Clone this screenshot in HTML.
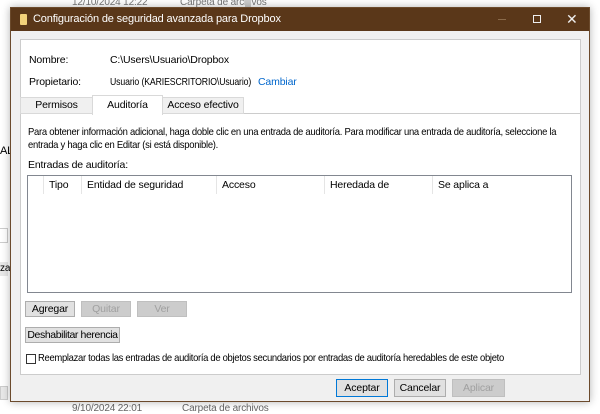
<!DOCTYPE html>
<html><head><style>
*{margin:0;padding:0;box-sizing:border-box}
body{width:600px;height:408px;background:#fff;font-family:"Liberation Sans",sans-serif;font-size:10.5px;letter-spacing:-0.15px;color:#000;position:relative;overflow:hidden;white-space:nowrap}
.a{position:absolute}
.sx{transform-origin:0 0}
.btn{position:absolute;background:#e1e1e1;border:1px solid #adadad;text-align:center;line-height:14px;font-size:10.5px}
.dis{color:#a0a0a0;background:#ccc;border-color:#bfbfbf}
.hd{position:absolute;top:0;height:18px;line-height:18px;border-left:1px solid #e5e5e5;padding-left:5px}
</style></head><body>
<div class="a" style="left:72px;top:-1px;color:#777;font-size:10px;line-height:8px">12/10/2024 12:22</div>
<div class="a" style="left:180px;top:-1px;color:#777;font-size:10px;line-height:8px">Carpeta de archivos</div>
<div class="a" style="left:0;top:145px;font-size:11px">ALI</div>
<div class="a" style="left:0;top:228px;width:8px;height:15px;border:1px solid #ccc;border-left:none"></div>
<div class="a" style="left:0;top:262px;width:8px;height:14px;background:#e8e8e8"></div>
<div class="a" style="left:0;top:263px;font-size:10px">zar</div>
<div class="a" style="left:0;top:386px;width:8px;height:14px;background:#e8e8e8;border:1px solid #ccc"></div>
<div class="a" style="left:72px;top:403px;color:#666;font-size:10px">9/10/2024 22:01</div>
<div class="a" style="left:182px;top:403px;color:#666;font-size:10px">Carpeta de archivos</div>
<div class="a" style="left:245px;top:0;width:6px;height:8px;background:#ccc"></div>

<div class="a" style="left:10px;top:7px;width:580px;height:395px;background:#f0f0f0;border:1px solid #6b4a2c;box-shadow:0 0 8px rgba(0,0,0,.3)">
 <div class="a" style="left:0;top:0;width:578px;height:23px;background:#5a3719;color:#fff">
  <div class="a" style="left:9px;top:6px;width:7px;height:11px;background:#f3d27a;border-radius:1px"></div>
  <div class="a" style="left:22px;top:5px;font-size:11px">Configuración de seguridad avanzada para Dropbox</div>
  <div class="a" style="left:487px;top:11px;width:8px;height:1px;background:#8a6a4a"></div>
  <div class="a" style="left:522px;top:7px;width:8px;height:8px;border:1px solid #eee"></div>
  <div class="a" style="left:555px;top:3px;font-size:14px;color:#eee">✕</div>
 </div>
 <div class="a" style="left:9px;top:31px;width:561px;height:75px;background:#fff;border:1px solid #ccc">
  <div class="a" style="left:8px;top:14px">Nombre:</div>
  <div class="a" style="left:89px;top:14px">C:\Users\Usuario\Dropbox</div>
  <div class="a" style="left:8px;top:36px">Propietario:</div>
  <div class="a sx" style="left:89px;top:36px;transform:scaleX(0.83)">Usuario (KARIESCRITORIO\Usuario)</div>
  <div class="a" style="left:237px;top:36px;color:#0066cc">Cambiar</div>
 </div>
 <div class="a" style="left:9px;top:105px;width:561px;height:262px;background:#fff;border:1px solid #ccc">
  <div class="a sx" style="left:7px;top:12px;line-height:13px;letter-spacing:-0.3px;transform:scaleX(0.9)">Para obtener información adicional, haga doble clic en una entrada de auditoría. Para modificar una entrada de auditoría, seleccione la<br>entrada y haga clic en Editar (si está disponible).</div>
  <div class="a" style="left:7px;top:45px">Entradas de auditoría:</div>
  <div class="a" style="left:6px;top:61px;width:545px;height:118px;border:1px solid #828790;background:#fff">
   <div class="hd" style="left:15px">Tipo</div>
   <div class="hd" style="left:53px">Entidad de seguridad</div>
   <div class="hd" style="left:188px">Acceso</div>
   <div class="hd" style="left:296px">Heredada de</div>
   <div class="hd" style="left:404px">Se aplica a</div>
  </div>
  <div class="btn" style="left:4px;top:187px;width:50px;height:16px">Agregar</div>
  <div class="btn dis" style="left:60px;top:187px;width:50px;height:16px">Quitar</div>
  <div class="btn dis" style="left:116px;top:187px;width:50px;height:16px">Ver</div>
  <div class="btn" style="left:4px;top:213px;width:95px;height:16px;letter-spacing:-0.4px">Deshabilitar herencia</div>
  <div class="a" style="left:5px;top:240px;width:10px;height:10px;border:1px solid #333;background:#fff"></div>
  <div class="a sx" style="left:17px;top:238px;letter-spacing:-0.35px;transform:scaleX(0.9)">Reemplazar todas las entradas de auditoría de objetos secundarios por entradas de auditoría heredables de este objeto</div>
 </div>
 <div class="a" style="left:9px;top:89px;width:73px;height:17px;background:#f0f0f0;border:1px solid #d9d9d9;text-align:center;line-height:15px">Permisos</div>
 <div class="a" style="left:81px;top:87px;width:71px;height:20px;background:#fff;border:1px solid #d9d9d9;border-bottom:none;text-align:center;line-height:19px">Auditoría</div>
 <div class="a" style="left:151px;top:89px;width:82px;height:17px;background:#f0f0f0;border:1px solid #d9d9d9;text-align:center;line-height:15px">Acceso efectivo</div>
 <div class="btn" style="left:325px;top:371px;width:52px;height:18px;border:1px solid #0078d7;line-height:16px">Aceptar</div>
 <div class="btn" style="left:383px;top:371px;width:52px;height:18px;line-height:16px">Cancelar</div>
 <div class="btn dis" style="left:441px;top:371px;width:53px;height:18px;line-height:16px">Aplicar</div>
</div>
</body></html>
